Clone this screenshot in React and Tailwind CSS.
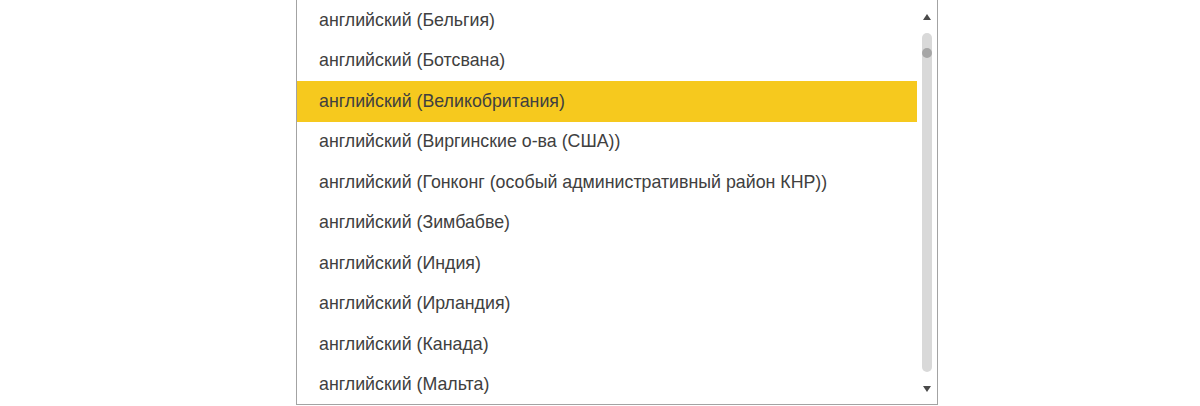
import React from "react";

const items = [
  "английский (Бельгия)",
  "английский (Ботсвана)",
  "английский (Великобритания)",
  "английский (Виргинские о-ва (США))",
  "английский (Гонконг (особый административный район КНР))",
  "английский (Зимбабве)",
  "английский (Индия)",
  "английский (Ирландия)",
  "английский (Канада)",
  "английский (Мальта)",
];

const App = () => {
  const selected = 2;
  return (
    <div className="w-[1200px] h-[406px] bg-white overflow-hidden">
      <div className="ml-[296px] w-[642px] h-[405px] flex border-l border-r border-b border-[#a3a3a3] bg-white">
        <div className="w-[620px] flex flex-col">
          {items.map((item, i) => (
            <div
              key={i}
              className={`h-[40.5px] shrink-0 flex items-center pl-[22px] text-[17.8px] text-[#404040] ${
                i === selected ? "bg-[#f6c91e]" : ""
              }`}
              style={{ fontFamily: '"Liberation Sans", Arial, sans-serif' }}
            >
              {item}
            </div>
          ))}
        </div>
        <div className="flex-1 flex flex-col items-center pt-[14px] pb-[12px] pr-[1px]">
          <svg width="8" height="6" viewBox="0 0 8 6" className="shrink-0">
            <path d="M4 0 L8 6 L0 6 Z" fill="#4a4a4a" />
          </svg>
          <div className="mt-[13px] mb-[14px] flex-1 w-[10px] rounded-full bg-[#d9d9d9] pt-[15px] flex justify-center">
            <div className="w-[10px] h-[10px] rounded-full bg-[#a6a6a6]" />
          </div>
          <svg width="8" height="6" viewBox="0 0 8 6" className="shrink-0">
            <path d="M0 0 L8 0 L4 6 Z" fill="#4a4a4a" />
          </svg>
        </div>
      </div>
    </div>
  );
};

export default App;
